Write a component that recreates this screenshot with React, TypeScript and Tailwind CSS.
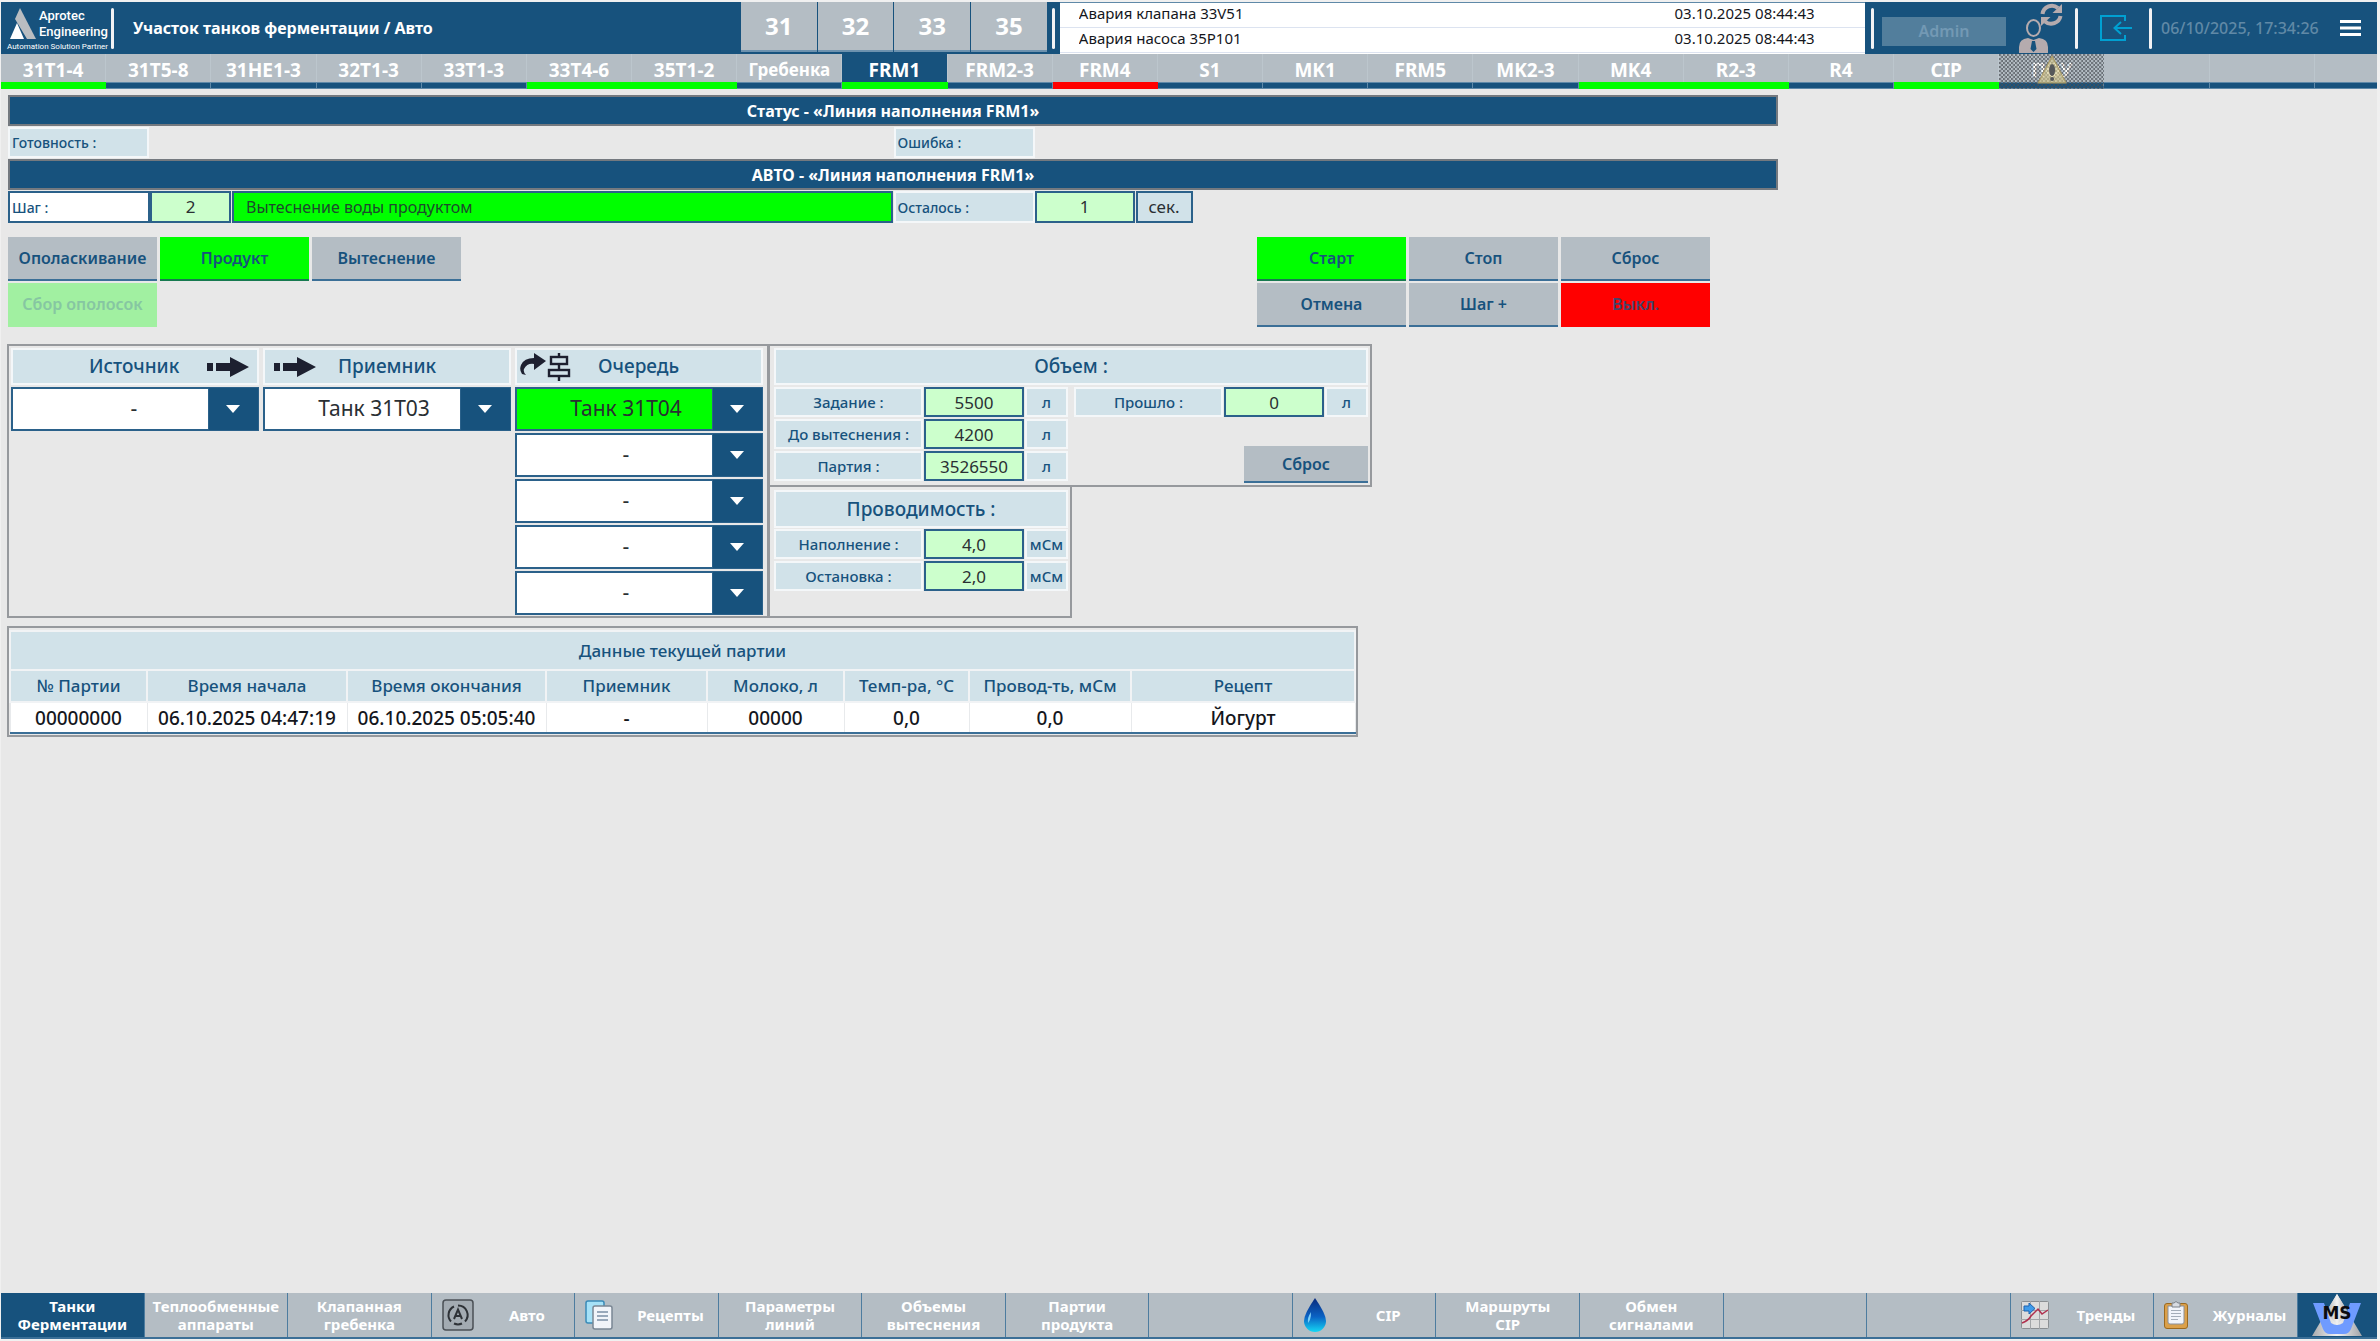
import { type ReactNode } from "react";

type Tone = "idle" | "ok" | "alarm";

const areas = ["31", "32", "33", "35"];

const alarms = [
  { text: "Авария клапана 33V51", time: "03.10.2025 08:44:43" },
  { text: "Авария насоса 35P101", time: "03.10.2025 08:44:43" },
];

const tabs: { label: string; tone: Tone }[] = [
  { label: "31T1-4", tone: "ok" },
  { label: "31T5-8", tone: "idle" },
  { label: "31НЕ1-3", tone: "idle" },
  { label: "32T1-3", tone: "idle" },
  { label: "33T1-3", tone: "idle" },
  { label: "33T4-6", tone: "ok" },
  { label: "35T1-2", tone: "ok" },
  { label: "Гребенка", tone: "idle" },
  { label: "FRM1", tone: "ok" },
  { label: "FRM2-3", tone: "idle" },
  { label: "FRM4", tone: "alarm" },
  { label: "S1", tone: "idle" },
  { label: "MK1", tone: "idle" },
  { label: "FRM5", tone: "idle" },
  { label: "MK2-3", tone: "idle" },
  { label: "MK4", tone: "ok" },
  { label: "R2-3", tone: "ok" },
  { label: "R4", tone: "idle" },
  { label: "CIP", tone: "ok" },
  { label: "ПОУ", tone: "idle" },
  { label: "", tone: "idle" },
  { label: "", tone: "idle" },
];

const toneLine: Record<Tone, string> = {
  idle: "bg-[#17527d] border-[#5f89a8]",
  ok: "bg-[#00ff00] border-[#00ff00]",
  alarm: "bg-[#ff0000] border-[#ff0000]",
};

const columns = [
  { title: "№ Партии", value: "00000000", width: "w-[137px]" },
  { title: "Время начала", value: "06.10.2025 04:47:19", width: "w-[200px]" },
  { title: "Время окончания", value: "06.10.2025 05:05:40", width: "w-[199px]" },
  { title: "Приемник", value: "-", width: "w-[161px]" },
  { title: "Молоко, л", value: "00000", width: "w-[137px]" },
  { title: "Темп-ра, °C", value: "0,0", width: "w-[125px]" },
  { title: "Провод-ть, мСм", value: "0,0", width: "w-[162px]" },
  { title: "Рецепт", value: "Йогурт", width: "w-[224px]" },
];

function Logo() {
  return (
    <div className="w-[110px] shrink-0 flex flex-col pt-1.5 pl-1.5 text-white">
      <div className="flex gap-0.5 h-[31px]">
        <svg viewBox="0 0 30 32" className="w-[30px] h-8">
          <path d="M13 0 L29 31 L20 31 L8 11 Z" fill="#b9bdc1" />
          <path d="M10 15 L17 31 L3 31 Z" fill="#fff" />
        </svg>
        <div className="font-['Roboto',sans-serif] text-[13px] leading-4 font-medium">
          Aprotec
          <br />
          Engineering
        </div>
      </div>
      <div className="font-['Roboto',sans-serif] text-[8px] leading-4 whitespace-nowrap">
        Automation Solution Partner
      </div>
    </div>
  );
}

function Separator() {
  return <div className="w-[3px] h-[41px] my-auto shrink-0 bg-[#f2f2f4] rounded-sm" />;
}

function UserIcon() {
  return (
    <svg viewBox="0 0 46 50" className="w-[46px] h-[50px]">
      <ellipse cx="16.500" cy="25" rx="6.500" ry="8" fill="none" stroke="#b5abae" strokeWidth="2" />
      <path d="M2 50 V44 Q2 36 11 35 L16.500 37 L22 35 Q31 36 31 44 V50 Z" fill="#b5abae" />
      <path d="M15 38 h3 l1.500 8 l-3 3 l-3 -3 Z" fill="#17527d" />
      <path d="M25.500 11 A 9.500 9.500 0 0 1 41 5" fill="none" stroke="#b5abae" strokeWidth="4" />
      <path d="M43.500 13 A 9.500 9.500 0 0 1 28 18.500" fill="none" stroke="#b5abae" strokeWidth="4" />
      <path d="M45 1 V10 H35.500 Z" fill="#b5abae" />
      <path d="M24 23 V14 H33.500 Z" fill="#b5abae" />
    </svg>
  );
}

function ExitIcon() {
  return (
    <svg viewBox="0 0 32 26" className="w-8 h-[26px]" fill="none" stroke="#00a0d2" strokeWidth="2">
      <path d="M25 6 V1 H1 V25 H25 V20" />
      <path d="M32 13 H15 M21 7 L14.500 13 L21 19" />
    </svg>
  );
}

function Header() {
  return (
    <header className="flex h-[52px] bg-[#17527d]">
      <Logo />
      <Separator />
      <h1 className="flex-[607] min-w-0 ml-[19px] self-center text-base font-bold text-white whitespace-nowrap">
        Участок танков ферментации / Авто
      </h1>
      <nav className="flex w-[306px] shrink-0 gap-px border-b-2 border-[#17527d] bg-[#17527d]">
        {areas.map((a) => (
          <button
            key={a}
            type="button"
            className="flex-1 bg-[#b4bdc4] border-b-2 border-[#6d92ae] text-2xl font-bold text-white"
          >
            {a}
          </button>
        ))}
      </nav>
      <div className="w-[13px] shrink-0 flex justify-center">
        <Separator />
      </div>
      <ul className="flex-[804] min-w-0 bg-white border-t border-[#5f89a8] text-[15px] text-[#14161c]">
        {alarms.map((a) => (
          <li key={a.text} className="flex h-[25px] items-center border-b border-[#dce3f0] pl-[19px] pb-[3px]">
            <span className="flex-[594] truncate">{a.text}</span>
            <time className="flex-[190] whitespace-nowrap">{a.time}</time>
          </li>
        ))}
      </ul>
      <div className="flex shrink-0 items-center pl-1.5">
        <Separator />
        <button
          type="button"
          disabled
          className="w-[124px] h-[29px] mt-1.5 ml-2 bg-[#527e9c] text-base font-semibold text-[#7399b4]"
        >
          Admin
        </button>
        <button type="button" aria-label="Сменить пользователя" className="ml-[11px] mr-3">
          <UserIcon />
        </button>
        <Separator />
        <button type="button" aria-label="Выход" className="ml-[22px] mr-[17px]">
          <ExitIcon />
        </button>
        <Separator />
        <time className="w-[188px] pl-[9px] text-base font-medium text-[#6089a6] whitespace-nowrap">
          06/10/2025, 17:34:26
        </time>
        <button type="button" aria-label="Меню" className="mr-4">
          <svg viewBox="0 0 21 16" className="w-[21px] h-4" fill="#fff">
            <rect width="21" height="3" />
            <rect y="6.500" width="21" height="3" />
            <rect y="13" width="21" height="3" />
          </svg>
        </button>
      </div>
    </header>
  );
}

// Hatched cover for a tab whose controller is off line.
function OfflineCover() {
  return (
    <svg className="absolute inset-0 w-full h-full" viewBox="0 0 105 35" preserveAspectRatio="none">
      <defs>
        <pattern id="hatch" width="4" height="4" patternUnits="userSpaceOnUse">
          <rect width="2" height="2" fill="#4a4f55" />
          <rect x="2" y="2" width="2" height="2" fill="#4a4f55" />
        </pattern>
      </defs>
      <rect width="105" height="35" fill="url(#hatch)" opacity="0.700" />
      <path d="M53 2 L67 29 H39 Z" fill="#d8c98a" fillOpacity="0.600" stroke="#a99a62" />
      <ellipse cx="53" cy="16" rx="3" ry="6" fill="#55585a" />
      <circle cx="53" cy="25" r="2" fill="#55585a" />
    </svg>
  );
}

function Tabs() {
  return (
    <nav className="flex h-[35px] bg-[#b4bdc4]">
      {tabs.map((t, i) => (
        <button
          key={i}
          type="button"
          className={`relative flex-[105] min-w-0 flex flex-col font-bold text-white ${
            t.label === "FRM1" ? "bg-[#17527d]" : ""
          } ${t.label.length > 7 ? "text-[17px]" : "text-[19px]"}`}
        >
          <span className="w-full h-7 leading-8 border-r border-[#bcc6cd]">{t.label}</span>
          <span className={`w-full h-[7px] border-y border-r ${toneLine[t.tone]}`} />
          {t.label === "ПОУ" && <OfflineCover />}
        </button>
      ))}
      <div className="flex-[62] flex flex-col justify-end">
        <span className={`h-[7px] border-y ${toneLine.idle}`} />
      </div>
    </nav>
  );
}

function Band({ children }: { children: ReactNode }) {
  return (
    <h2 className="h-[31px] leading-7 bg-[#17527d] border-2 border-[#74797f] text-center text-base font-bold text-white">
      {children}
    </h2>
  );
}

function Tag({ children, className = "" }: { children: ReactNode; className?: string }) {
  return (
    <div
      className={`flex items-center bg-[#d1e2e9] border-2 border-[#f4f7f9] font-medium text-[#17527d] whitespace-nowrap ${className}`}
    >
      {children}
    </div>
  );
}

function Field({ label, value, className }: { label: string; value: string; className: string }) {
  return (
    <input
      aria-label={label}
      defaultValue={value}
      className={`min-w-0 bg-[#ccffcc] border-2 border-[#2b618a] text-center text-[17px] text-[#2a2f33] ${className}`}
    />
  );
}

const buttonTone = {
  gray: "bg-[#b4bdc4] text-[#17527d] border-[#3b6f97]",
  green: "bg-[#00ff00] text-[#17527d] border-[#177a50]",
  red: "bg-[#ff0000] text-[#46446a] border-[#ff0000]",
  off: "bg-[#a1f0a1] text-[#86c6a2] border-[#a1f0a1]",
};

function Command({ label, tone = "gray" }: { label: string; tone?: keyof typeof buttonTone }) {
  return (
    <button
      type="button"
      disabled={tone === "off"}
      className={`w-[149px] h-11 border-b-2 text-base font-semibold whitespace-nowrap ${buttonTone[tone]}`}
    >
      {label}
    </button>
  );
}

function Picker({
  label,
  value,
  active = false,
  indent = "pl-6",
}: {
  label: string;
  value: string;
  active?: boolean;
  indent?: string;
}) {
  return (
    <div className="relative w-[248px] h-11">
      <select
        aria-label={label}
        defaultValue={value}
        className={`w-full h-full appearance-none border-2 border-[#2b618a] pr-[50px] text-[21px] text-[#2a2f33] [text-align-last:center] ${indent} ${
          active ? "bg-[#00ff00]" : "bg-white"
        }`}
      >
        <option>{value}</option>
      </select>
      <span className="absolute inset-y-0 right-0 w-[51px] flex items-center justify-center bg-[#17527d] border border-[#2b618a] pr-0.5 pointer-events-none">
        <svg viewBox="0 0 14 8" className="w-3.5 h-2" fill="#fff">
          <path d="M0 0 H14 L7 8 Z" />
        </svg>
      </span>
    </div>
  );
}

function ArrowIcon() {
  return (
    <svg viewBox="0 0 42 20" className="w-[42px] h-5" fill="#1d2030">
      <path d="M0 6 H6 V14 H0 Z M9 6 H23 V0 L42 10 L23 20 V14 H9 Z" />
    </svg>
  );
}

function QueueIcon() {
  return (
    <svg viewBox="0 0 52 28" className="w-[52px] h-7">
      <path
        d="M2 21 Q-1 17 1 12 Q4 5 14 5 V0 L26 8 L14 17 V11 Q7 10 4 16 Q3 19 6 22 Z"
        fill="#1d2030"
      />
      <g fill="none" stroke="#1d2030" strokeWidth="2.400">
        <path d="M39 0 V5 M39 11 V17 M39 23 V28" />
        <rect x="31" y="4" width="16" height="7" />
        <rect x="29" y="17" width="20" height="6" />
      </g>
    </svg>
  );
}

function Routing() {
  return (
    <section className="w-[762px] shrink-0 flex gap-1 border-2 border-[#96999d] pl-0.5 pt-0.5">
      <div className="flex flex-col gap-0.5">
        <Tag className="w-[248px] h-[37px] pl-[76px] gap-7 text-[19px]">
          Источник
          <ArrowIcon />
        </Tag>
        <Picker label="Источник" value="-" indent="pl-12" />
      </div>
      <div className="flex flex-col gap-0.5">
        <Tag className="w-[248px] h-[37px] pl-[9px] gap-[22px] text-[19px]">
          <ArrowIcon />
          Приемник
        </Tag>
        <Picker label="Приемник" value="Танк 31T03" />
      </div>
      <div className="flex flex-col gap-0.5">
        <Tag className="w-[248px] h-[37px] pl-[3px] gap-[26px] text-[19px]">
          <QueueIcon />
          Очередь
        </Tag>
        <Picker label="Очередь 1" value="Танк 31T04" active />
        {[2, 3, 4, 5].map((n) => (
          <Picker key={n} label={`Очередь ${n}`} value="-" />
        ))}
      </div>
    </section>
  );
}

function Measure({ label, value, unit }: { label: string; value: string; unit: string }) {
  return (
    <div className="flex h-[30px] gap-px">
      <Tag className="w-[149px] justify-center text-[15px]">{label} :</Tag>
      <Field label={label} value={value} className="w-[100px] h-full" />
      <Tag className="w-[43px] justify-center text-[15px]">{unit}</Tag>
    </div>
  );
}

function Volume() {
  return (
    <section className="w-[604px] h-[143px] -ml-px border-2 border-[#96999d] pt-0.5 pl-1 pr-0.5">
      <Tag className="h-[37px] justify-center text-[19px]">Объем :</Tag>
      <div className="flex justify-between items-start mt-0.5">
        <div className="flex flex-col gap-0.5">
          <Measure label="Задание" value="5500" unit="л" />
          <Measure label="До вытеснения" value="4200" unit="л" />
          <Measure label="Партия" value="3526550" unit="л" />
        </div>
        <div className="h-24 flex flex-col items-end justify-between">
          <Measure label="Прошло" value="0" unit="л" />
          <button
            type="button"
            className="w-[124px] h-[37px] bg-[#b4bdc4] border-b-2 border-[#3b6f97] text-base font-semibold text-[#17527d]"
          >
            Сброс
          </button>
        </div>
      </div>
    </section>
  );
}

function Conductivity() {
  return (
    <section className="w-[304px] flex-1 -ml-px -mt-px border-2 border-t-0 border-[#96999d] pt-1 pl-1 pr-0.5">
      <Tag className="h-[38px] justify-center text-[19px]">Проводимость :</Tag>
      <div className="flex flex-col gap-0.5 mt-px">
        <Measure label="Наполнение" value="4,0" unit="мСм" />
        <Measure label="Остановка" value="2,0" unit="мСм" />
      </div>
    </section>
  );
}

function BatchTable() {
  return (
    <section className="max-w-[1351px] h-[111px] mt-2 border-2 border-[#96999d] pt-0.5 pr-1">
      <table className="w-full table-fixed border-collapse">
        <colgroup>
          {columns.map((c) => (
            <col key={c.title} className={c.width} />
          ))}
        </colgroup>
        <thead>
          <tr className="h-[39px]">
            <th
              colSpan={columns.length}
              className="bg-[#d1e2e9] border-2 border-[#f1f3f5] p-0 text-[17px] leading-6 font-medium text-[#17527d]"
            >
              Данные текущей партии
            </th>
          </tr>
          <tr className="h-8">
            {columns.map((c) => (
              <th
                key={c.title}
                className="bg-[#d1e2e9] border-2 border-[#f1f3f5] p-0 text-[17px] leading-6 font-medium text-[#17527d] whitespace-nowrap"
              >
                {c.title}
              </th>
            ))}
          </tr>
        </thead>
        <tbody>
          <tr className="h-[31px]">
            {columns.map((c) => (
              <td
                key={c.title}
                className="bg-white border-x border-x-[#e8eaec] border-b-2 border-b-[#3b6f97] p-0 text-center text-[19px] leading-6 font-medium text-[#14161c] whitespace-nowrap"
              >
                {c.value}
              </td>
            ))}
          </tr>
        </tbody>
      </table>
    </section>
  );
}

function AutoIcon() {
  return (
    <svg viewBox="0 0 32 32" className="w-8 h-8" fill="none" stroke="#2e3237">
      <rect x="1" y="1" width="30" height="30" rx="3" fill="#a3abb2" stroke="#4b5056" strokeWidth="1.500" />
      <path d="M9 22.500 A 9.500 9.500 0 0 1 12 7.500" strokeWidth="2" />
      <path d="M16 6.500 A 9.500 9.500 0 0 1 23 22.500" strokeWidth="2" />
      <path d="M12 24.500 A 9.500 9.500 0 0 0 20 24.500" strokeWidth="2" />
      <path d="M12 20 L16 10.500 L20 20 M13.500 17 H18.500" strokeWidth="2" />
    </svg>
  );
}

function RecipesIcon() {
  return (
    <svg viewBox="0 0 28 30" className="w-7 h-[30px]">
      <rect x="1" y="1" width="18" height="22" rx="2" fill="#a5e1f7" stroke="#3a8bb8" strokeWidth="1.500" />
      <rect x="8" y="6" width="19" height="23" rx="2" fill="#f1f4f9" stroke="#7a8794" strokeWidth="1.500" />
      <path d="M12 12 H23 M12 16 H23 M12 20 H23" stroke="#7b8fa5" strokeWidth="1.500" />
    </svg>
  );
}

function DropIcon() {
  return (
    <svg viewBox="0 0 24 34" className="w-6 h-[34px]">
      <defs>
        <linearGradient id="drop" x1="0" y1="0" x2="0" y2="1">
          <stop offset="0" stopColor="#0a2a7c" />
          <stop offset="0.550" stopColor="#0a62c4" />
          <stop offset="1" stopColor="#15d7f4" />
        </linearGradient>
      </defs>
      <path d="M12 0 Q23 16 23 23 A 11 11 0 0 1 1 23 Q1 16 12 0 Z" fill="url(#drop)" />
      <path d="M8 14 Q4 20 5 25 Q8 22 8 14 Z" fill="#7fd0f7" />
    </svg>
  );
}

function TrendsIcon() {
  return (
    <svg viewBox="0 0 28 28" className="w-7 h-7">
      <rect x="0.500" y="0.500" width="27" height="27" rx="1" fill="#dcdcdc" stroke="#8b8f93" />
      <path d="M9.500 0 V28 M18.500 0 V28 M0 9.500 H28 M0 18.500 H28" stroke="#a2a5a8" />
      <path d="M3 5 H8 V2 L14 7.500 L8 13 V10 H3 Z" fill="#3f9bea" stroke="#1d62b0" />
      <path d="M1 22 Q7 20 10 15 L17 8 L21 13 L27 9" fill="none" stroke="#b0304e" strokeWidth="1.500" />
    </svg>
  );
}

function JournalIcon() {
  return (
    <svg viewBox="0 0 24 28" className="w-6 h-7">
      <rect x="0.500" y="2.500" width="23" height="25" rx="2.500" fill="#dba04a" stroke="#9c6a20" />
      <path d="M4 5 H20 V21 Q20 23 18 23 H6 Q4 23 4 21 Z" fill="#f1f4fa" stroke="#8a8f99" />
      <path d="M8 2 H10 Q12 -1 14 2 H16 V6 H8 Z" fill="#d8dce2" stroke="#7a8088" />
      <path d="M7 9.500 H17 M7 12.500 H17 M7 15.500 H17 M7 18.500 H14" stroke="#a4adb8" />
    </svg>
  );
}

function MsLogo() {
  return (
    <svg viewBox="0 0 52 44" className="w-[52px] h-11">
      <defs>
        <linearGradient id="steel" x1="0" y1="0" x2="1" y2="0">
          <stop offset="0" stopColor="#a9abae" />
          <stop offset="0.500" stopColor="#f2f2f2" />
          <stop offset="1" stopColor="#a2a4a8" />
        </linearGradient>
      </defs>
      <path d="M26 1 L51 43 H1 Z" fill="url(#steel)" />
      <path d="M2 10 H13 L20 30 Q26 34 32 30 L39 10 H50 L40 36 Q38 41 33 41 H19 Q14 41 12 36 Z" fill="#6f9bff" />
      <path d="M26 1 L37 19 L26 32 L15 19 Z" fill="url(#steel)" />
      <text
        x="26"
        y="26"
        textAnchor="middle"
        className="font-['DejaVu_Sans',sans-serif] text-[17px] font-bold"
        fill="#0b0b0f"
      >
        MS
      </text>
    </svg>
  );
}

const footer: { label: string; icon?: ReactNode; active?: boolean }[] = [
  { label: "Танки Ферментации", active: true },
  { label: "Теплообменные аппараты" },
  { label: "Клапанная гребенка" },
  { label: "Авто", icon: <AutoIcon /> },
  { label: "Рецепты", icon: <RecipesIcon /> },
  { label: "Параметры линий" },
  { label: "Объемы вытеснения" },
  { label: "Партии продукта" },
  { label: "" },
  { label: "CIP", icon: <DropIcon /> },
  { label: "Маршруты CIP" },
  { label: "Обмен сигналами" },
  { label: "" },
  { label: "" },
  { label: "Тренды", icon: <TrendsIcon /> },
  { label: "Журналы", icon: <JournalIcon /> },
];

function Footer() {
  return (
    <footer className="flex h-[46px] bg-[#b4bdc4] border-b-2 border-[#3b6f97]">
      {footer.map((f, i) => (
        <button
          key={i}
          type="button"
          className={`flex-[144] min-w-0 flex items-center justify-center border-r border-[#4d7c9f] text-[15px] leading-[18px] font-bold text-white ${
            f.active ? "bg-[#17527d]" : ""
          }`}
        >
          {f.icon && <span className="w-[38px] shrink-0 ml-2.5">{f.icon}</span>}
          <span className={f.icon ? "flex-1" : "w-min text-center"}>{f.label}</span>
        </button>
      ))}
      <div className="flex-[80] flex items-center justify-center bg-[#17527d]">
        <MsLogo />
      </div>
    </footer>
  );
}

export default function App() {
  return (
    <div className="min-h-screen flex flex-col bg-[#e8e8e8] border-t-2 border-l border-r-3 border-b-2 border-[#f0f0f0] font-['Noto_Sans',sans-serif]">
      <Header />
      <Tabs />
      <main className="flex-1 pt-1.5">
        <div className="max-w-[1777px] pl-[7px]">
          <Band>Статус - «Линия наполнения FRM1»</Band>
          <div className="grid grid-cols-2 gap-px my-px">
            <Tag className="w-[141px] h-[31px] pl-0.5 text-[14px]">Готовность :</Tag>
            <Tag className="w-[141px] h-[31px] pl-0.5 text-[14px]">Ошибка :</Tag>
          </div>
          <Band>АВТО - «Линия наполнения FRM1»</Band>
          <div className="grid grid-cols-2 gap-px h-8 mt-px">
            <div className="flex">
              <div className="w-[142px] shrink-0 flex items-center bg-white border-2 border-[#2b618a] pl-0.5 text-[14px] font-medium text-[#17527d]">
                Шаг :
              </div>
              <Field label="Шаг" value="2" className="w-[81px] shrink-0" />
              <output className="flex-1 flex items-center ml-px bg-[#00ff00] border-2 border-[#2b618a] pl-3 text-base text-[#1d4a2c]">
                Вытеснение воды продуктом
              </output>
            </div>
            <div className="flex">
              <Tag className="w-[141px] pl-0.5 text-[14px]">Осталось :</Tag>
              <Field label="Осталось" value="1" className="w-[100px]" />
              <div className="w-[57px] flex items-center justify-center ml-px bg-[#d1e2e9] border-2 border-[#2b618a] text-[17px] text-[#2a2f33]">
                сек.
              </div>
            </div>
          </div>
        </div>

        <div className="max-w-[1709px] flex justify-between items-start mt-3.5 pl-[7px]">
          <div className="grid grid-cols-3 gap-x-[3px] gap-y-0.5">
            <Command label="Ополаскивание" />
            <Command label="Продукт" tone="green" />
            <Command label="Вытеснение" />
            <Command label="Сбор ополосок" tone="off" />
          </div>
          <div className="grid grid-cols-3 gap-x-[3px] gap-y-0.5">
            <Command label="Старт" tone="green" />
            <Command label="Стоп" />
            <Command label="Сброс" />
            <Command label="Отмена" />
            <Command label="Шаг +" />
            <Command label="Выкл." tone="red" />
          </div>
        </div>

        <div className="pl-1.5">
          <div className="flex h-[274px] mt-[17px]">
            <Routing />
            <div className="flex flex-col">
              <Volume />
              <Conductivity />
            </div>
          </div>
          <BatchTable />
        </div>
      </main>
      <Footer />
    </div>
  );
}
